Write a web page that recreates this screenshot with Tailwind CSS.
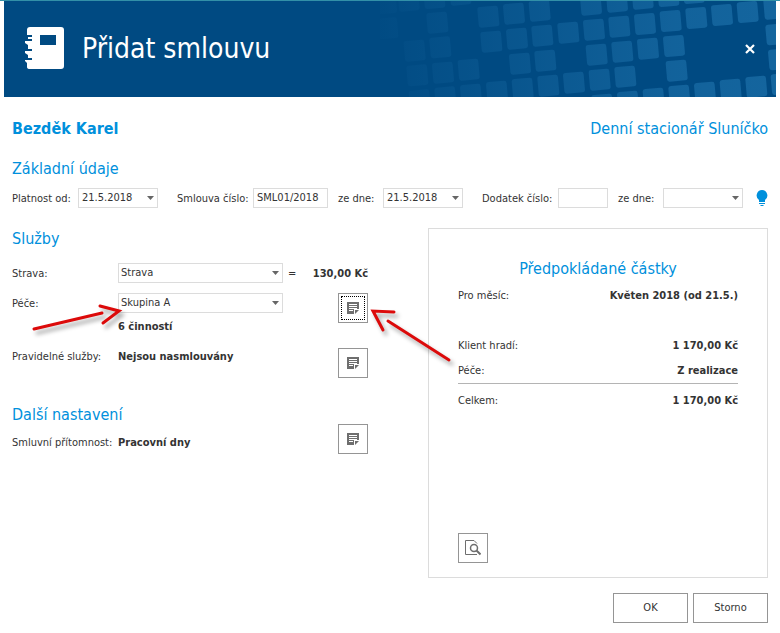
<!DOCTYPE html>
<html lang="cs">
<head>
    <meta charset="UTF-8">
    <meta name="viewport" content="width=device-width, initial-scale=1.0">
    <title>Přidat smlouvu</title>
    <script src="https://cdn.jsdelivr.net/npm/@tailwindcss/browser@4"></script>
</head>
<body class="min-h-screen flex flex-col bg-white border-t border-[#3290a8] text-[11px] leading-5 text-[#333333] font-['Tahoma','DejaVu_Sans_Condensed','DejaVu_Sans',sans-serif]">

    <!-- Shared icons -->
    <svg class="hidden">
        <symbol id="note" viewBox="0 0 12 12">
            <path fill="#6e6e6e" fill-rule="evenodd" d="M0 0H12V7H7V12H0ZM2 2V3H10V2ZM2 4V5H10V4ZM2 6V7H10V6ZM2 8V9H6V8Z"/>
            <path fill="#6e6e6e" d="M8 8H12L8 12Z"/>
        </symbol>
        <symbol id="arrow" viewBox="0 0 7 4">
            <path fill="#666666" d="M0 0H7L3.5 4Z"/>
        </symbol>
        <rect id="sq" x="-31" y="-31" width="62" height="62" rx="8" transform="rotate(-5)"/>
    </svg>

    <!-- Header -->
    <header class="relative mx-1 h-24 flex items-center justify-between overflow-hidden bg-[#004a82] text-white">
        <svg class="absolute right-0 top-0 w-[396px] h-24" viewBox="0 3 1188 288">
            <defs>
                <linearGradient id="fade">
                    <stop offset="0" stop-color="#004a82" stop-opacity="0.95"/>
                    <stop offset="0.2" stop-color="#004a82" stop-opacity="0.72"/>
                    <stop offset="0.75" stop-color="#004a82" stop-opacity="0.1"/>
                    <stop offset="1" stop-color="#004a82" stop-opacity="0"/>
                </linearGradient>
            </defs>
            <g fill="#14659e">
                <use href="#sq" x="18" y="10"/><use href="#sq" x="86" y="2"/><use href="#sq" x="163" y="-6"/><use href="#sq" x="241" y="-16"/>
                <use href="#sq" x="22" y="85"/><use href="#sq" x="172" y="68"/><use href="#sq" x="325" y="50"/><use href="#sq" x="402" y="41"/><use href="#sq" x="479" y="32"/>
                <use href="#sq" x="633" y="14"/><use href="#sq" x="711" y="5"/><use href="#sq" x="788" y="-4"/><use href="#sq" x="865" y="-12"/><use href="#sq" x="941" y="-21"/>
                <use href="#sq" x="104" y="152"/><use href="#sq" x="181" y="142"/><use href="#sq" x="334" y="125"/><use href="#sq" x="411" y="116"/><use href="#sq" x="487" y="107"/>
                <use href="#sq" x="565" y="98"/><use href="#sq" x="642" y="89"/><use href="#sq" x="718" y="80"/><use href="#sq" x="795" y="72"/><use href="#sq" x="872" y="63"/>
                <use href="#sq" x="949" y="54"/><use href="#sq" x="1026" y="45"/><use href="#sq" x="1103" y="36"/><use href="#sq" x="1183" y="26"/>
                <use href="#sq" x="112" y="226"/><use href="#sq" x="189" y="218"/><use href="#sq" x="266" y="209"/><use href="#sq" x="420" y="191"/><use href="#sq" x="496" y="182"/>
                <use href="#sq" x="650" y="164"/><use href="#sq" x="727" y="155"/><use href="#sq" x="804" y="146"/><use href="#sq" x="882" y="138"/>
                <use href="#sq" x="119" y="301"/><use href="#sq" x="196" y="292"/><use href="#sq" x="273" y="284"/><use href="#sq" x="351" y="275"/><use href="#sq" x="428" y="266"/>
                <use href="#sq" x="505" y="257"/><use href="#sq" x="582" y="248"/><use href="#sq" x="659" y="239"/><use href="#sq" x="736" y="230"/><use href="#sq" x="890" y="212"/>
                <use href="#sq" x="667" y="314"/><use href="#sq" x="744" y="305"/><use href="#sq" x="821" y="296"/><use href="#sq" x="898" y="287"/><use href="#sq" x="975" y="278"/>
                <use href="#sq" x="1052" y="269"/><use href="#sq" x="1129" y="260"/><use href="#sq" x="1205" y="252"/><use href="#sq" x="1189" y="103"/><use href="#sq" x="1197" y="178"/>
            </g>
            <rect width="1188" height="300" fill="url(#fade)"/>
        </svg>
        <div class="relative flex items-center gap-4 pl-5">
            <svg class="w-[42px] h-11" viewBox="0 0 42 44">
                <path fill="#ffffff" fill-rule="evenodd" d="M6 0H37Q40 0 40 3V39Q40 42 37 42H6Q3 42 3 40V36L1 34V33H8V31H4V28L1 26V24H8V22H4V18L1 16V14H8V12H4V10H8V8H3V3Q3 0 6 0ZM16 8V18H32V8Z"/>
            </svg>
            <h1 class="text-[28px] leading-9">Přidat smlouvu</h1>
        </div>
        <button type="button" aria-label="Zavřít" class="relative mr-4 p-1">
            <svg class="w-3 h-3" viewBox="0 0 12 12"><path d="M2 2L10 10M10 2L2 10" stroke="#ffffff" stroke-width="2.2"/></svg>
        </button>
    </header>

    <main class="flex-1 flex flex-col px-3 pt-[22px] pb-2.5">
        <div class="flex justify-between text-base leading-5 text-[#0090dc]">
            <h2 class="font-bold">Bezděk Karel</h2>
            <h2>Denní stacionář Sluníčko</h2>
        </div>

        <!-- Basic data -->
        <h3 class="mt-5 text-base leading-5 text-[#0090dc]">Základní údaje</h3>
        <div class="mt-[9px] h-5 flex items-center whitespace-nowrap">
            <label for="from" class="w-[66px] pt-0.5">Platnost od:</label>
            <div class="w-20 h-5 flex items-center border border-[#dcdcdc]">
                <input id="from" type="text" value="21.5.2018" class="min-w-0 flex-1 pl-[3px] outline-none">
                <button type="button" aria-label="Vybrat datum" class="px-[3px]"><svg class="w-[7px] h-1"><use href="#arrow"/></svg></button>
            </div>
            <label for="contract" class="ml-[19px] w-[76px] pt-0.5">Smlouva číslo:</label>
            <input id="contract" type="text" value="SML01/2018" class="w-[75px] h-5 pl-[3px] border border-[#dcdcdc] outline-none">
            <label for="contractDate" class="ml-2.5 w-[45px] pt-0.5">ze dne:</label>
            <div class="w-20 h-5 flex items-center border border-[#dcdcdc]">
                <input id="contractDate" type="text" value="21.5.2018" class="min-w-0 flex-1 pl-[3px] outline-none">
                <button type="button" aria-label="Vybrat datum" class="px-[3px]"><svg class="w-[7px] h-1"><use href="#arrow"/></svg></button>
            </div>
            <label for="addendum" class="ml-[19px] w-[76px] pt-0.5">Dodatek číslo:</label>
            <input id="addendum" type="text" class="w-[50px] h-5 pl-[3px] border border-[#dcdcdc] outline-none">
            <label for="addendumDate" class="ml-2.5 w-[45px] pt-0.5">ze dne:</label>
            <div class="w-20 h-5 flex items-center border border-[#dcdcdc]">
                <input id="addendumDate" type="text" class="min-w-0 flex-1 pl-[3px] outline-none">
                <button type="button" aria-label="Vybrat datum" class="px-[3px]"><svg class="w-[7px] h-1"><use href="#arrow"/></svg></button>
            </div>
            <button type="button" aria-label="Nápověda" class="ml-auto">
                <svg class="w-3 h-4" viewBox="0 0 12 16" fill="#0090dc"><path d="M6 0A5.500 5.500 0 0 1 9 10V12H3V10A5.500 5.500 0 0 1 6 0ZM3 13H9V14H3ZM4.500 15H7.500V16H4.500Z"/></svg>
            </button>
        </div>

        <div class="relative mt-5 flex-1 flex gap-[60px]">
            <!-- Left column -->
            <div class="w-[356px] shrink-0 pt-px">
                <h3 class="text-base leading-5 text-[#0090dc]">Služby</h3>
                <div class="mt-3.5 h-5 flex items-center">
                    <label for="food" class="w-[106px] pt-0.5">Strava:</label>
                    <div class="relative w-[165px]">
                        <select id="food" class="block w-full h-5 pl-0.5 leading-[18px] appearance-none border border-[#dcdcdc] outline-none"><option>Strava</option></select>
                        <svg class="absolute right-1 top-2 w-[7px] h-1 pointer-events-none"><use href="#arrow"/></svg>
                    </div>
                    <span class="ml-[5px] pt-0.5">=</span>
                    <span class="ml-auto pt-0.5 font-bold">130,00 Kč</span>
                </div>
                <div class="mt-2.5 flex items-start">
                    <label for="care" class="w-[106px] pt-px">Péče:</label>
                    <div class="relative w-[165px]">
                        <select id="care" class="block w-full h-5 pl-0.5 leading-[18px] appearance-none border border-[#dcdcdc] outline-none"><option>Skupina A</option></select>
                        <svg class="absolute right-1 top-2 w-[7px] h-1 pointer-events-none"><use href="#arrow"/></svg>
                        <p class="mt-1 font-bold">6 činností</p>
                    </div>
                    <button type="button" aria-label="Upravit péči" class="ml-auto p-0.5 size-[30px] border border-[#959595]">
                        <span class="flex items-center justify-center size-6 border border-dotted border-black"><svg class="size-3"><use href="#note"/></svg></span>
                    </button>
                </div>
                <div class="mt-[11px] flex items-start">
                    <span class="w-[106px] pt-px leading-4">Pravidelné služby:</span>
                    <span class="pt-px font-bold leading-4">Nejsou nasmlouvány</span>
                    <button type="button" aria-label="Upravit pravidelné služby" class="ml-auto flex items-center justify-center size-[30px] border border-[#959595]"><svg class="size-3"><use href="#note"/></svg></button>
                </div>
                <h3 class="mt-[27px] text-base leading-5 text-[#0090dc]">Další nastavení</h3>
                <div class="-mt-px flex items-center">
                    <span class="w-[106px] pt-2 whitespace-nowrap">Smluvní přítomnost:</span>
                    <span class="pt-2 font-bold">Pracovní dny</span>
                    <button type="button" aria-label="Upravit přítomnost" class="ml-auto flex items-center justify-center size-[30px] border border-[#959595]"><svg class="size-3"><use href="#note"/></svg></button>
                </div>
            </div>

            <!-- Expected amounts -->
            <section class="flex-1 flex flex-col px-[29px] pt-[30px] pb-3.5 border border-[#dcdcdc]">
                <h3 class="text-center text-base leading-5 text-[#0090dc]">Předpokládané částky</h3>
                <dl>
                    <div class="mt-[7px] flex justify-between"><dt>Pro měsíc:</dt><dd class="font-bold">Květen 2018 (od 21.5.)</dd></div>
                    <div class="mt-[30px] flex justify-between"><dt>Klient hradí:</dt><dd class="font-bold">1 170,00 Kč</dd></div>
                    <div class="mt-[5px] pb-0.5 flex justify-between border-b border-[#b4b4b4]"><dt>Péče:</dt><dd class="font-bold">Z realizace</dd></div>
                    <div class="mt-[7px] flex justify-between"><dt>Celkem:</dt><dd class="font-bold">1 170,00 Kč</dd></div>
                </dl>
                <button type="button" aria-label="Náhled" class="mt-auto flex items-center justify-center size-[30px] border border-[#959595]">
                    <svg class="size-4" viewBox="0 0 16 16" fill="none" stroke="#6e6e6e"><path d="M12 14.500H0.500V0.500H9L12 3.500"/><circle cx="9" cy="8" r="3.500" stroke-width="1.500"/><path d="M11.500 10.500L15.500 14.500" stroke-width="2"/></svg>
                </button>
            </section>

            <!-- Red pointers -->
            <svg class="absolute left-0 top-0 w-[448px] h-[150px] pointer-events-none [filter:drop-shadow(3px_4px_2px_rgba(0,0,0,0.35))]" viewBox="12 228 448 150" fill="none" stroke="#dc0a0a" stroke-width="3" stroke-linecap="round">
                <path d="M34 329L102 313M100 306L119 311L103 323"/>
                <path d="M449 360L388 321M394 312L373 311L383 330"/>
            </svg>
        </div>

        <div class="mt-[15px] flex justify-end gap-[5px]">
            <button type="submit" class="w-[75px] h-[30px] border border-[#959595]">OK</button>
            <button type="button" class="w-[75px] h-[30px] border border-[#959595]">Storno</button>
        </div>
    </main>

</body>
</html>
